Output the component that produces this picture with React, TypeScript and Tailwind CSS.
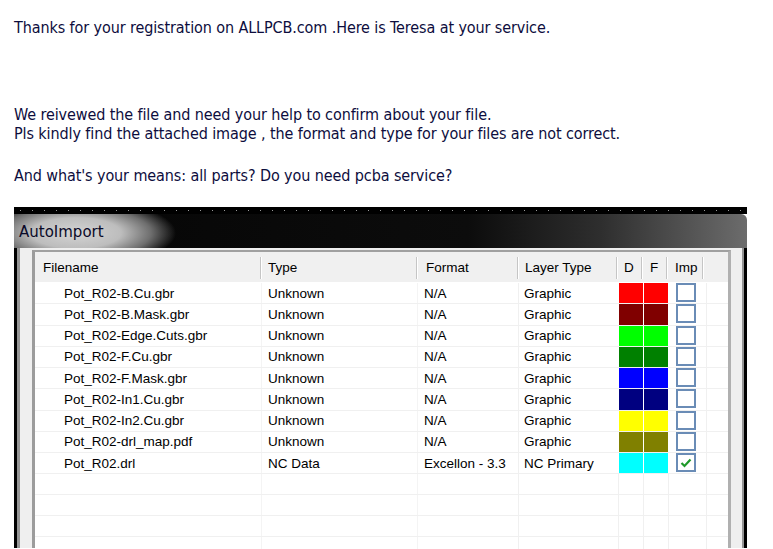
import React from "react";

const rows = [
  { f: "Pot_R02-B.Cu.gbr", t: "Unknown", fm: "N/A", l: "Graphic", c: "#ff0000", chk: false },
  { f: "Pot_R02-B.Mask.gbr", t: "Unknown", fm: "N/A", l: "Graphic", c: "#800000", chk: false },
  { f: "Pot_R02-Edge.Cuts.gbr", t: "Unknown", fm: "N/A", l: "Graphic", c: "#00ff00", chk: false },
  { f: "Pot_R02-F.Cu.gbr", t: "Unknown", fm: "N/A", l: "Graphic", c: "#008000", chk: false },
  { f: "Pot_R02-F.Mask.gbr", t: "Unknown", fm: "N/A", l: "Graphic", c: "#0000ff", chk: false },
  { f: "Pot_R02-In1.Cu.gbr", t: "Unknown", fm: "N/A", l: "Graphic", c: "#000080", chk: false },
  { f: "Pot_R02-In2.Cu.gbr", t: "Unknown", fm: "N/A", l: "Graphic", c: "#ffff00", chk: false },
  { f: "Pot_R02-drl_map.pdf", t: "Unknown", fm: "N/A", l: "Graphic", c: "#808000", chk: false },
  { f: "Pot_R02.drl", t: "NC Data", fm: "Excellon - 3.3", l: "NC Primary", c: "#00ffff", chk: true },
];

function HeaderCell({ w, label, pl, last }: { w: string; label: string; pl: string; last?: boolean }) {
  return (
    <div className={`${w} h-full relative flex items-center pt-[3px] ${pl}`}>
      <span>{label}</span>
      {!last && (
        <div className="absolute right-0 top-[5px] bottom-[3px] w-[2px] border-l border-[#c5c5c5] border-r border-r-white" />
      )}
    </div>
  );
}

export default function App() {
  const dots = Array.from({ length: 61 });
  return (
    <div
      className="w-[773px] h-[549px] bg-white overflow-hidden"
      style={{ fontFamily: '"Liberation Sans", Arial, sans-serif' }}
    >
      <div
        className="px-[14px] text-[16px] leading-[19px] text-[#0d0d3d] tracking-[-0.1px]"
        style={{ fontFamily: '"DejaVu Sans Condensed", "DejaVu Sans", sans-serif' }}
      >
        <p className="pt-[18px]">Thanks for your registration on ALLPCB.com .Here is Teresa at your service.</p>
        <p className="mt-[68px]">We reivewed the file and need your help to confirm about your file.</p>
        <p>Pls kindly find the attached image , the format and type for your files are not correct.</p>
        <p className="mt-[23px]">And what's your means: all parts? Do you need pcba service?</p>
      </div>

      <div className="ml-[14px] mt-[22px] w-[733px]">
        {/* dotted top strip */}
        <div className="h-[7px] bg-black flex items-center justify-between px-[6px]">
          {dots.map((_, i) => (
            <span key={i} className="w-[1px] h-[1px] bg-[#9a9a9a]" />
          ))}
        </div>
        {/* title bar */}
        <div className="h-[34px] rounded-tr-[6px] bg-[radial-gradient(ellipse_100px_34px_at_62px_19px,#d4d4d4_0%,#bdbdbd_45%,#6e6e6e_75%,rgba(0,0,0,0)_100%),linear-gradient(to_right,#050505_0%,#0c0c0c_62%,#2e2e2e_80%,#6c6c6c_100%)] flex items-center pl-[5px] pt-[3px]">
          <span
            className="text-[15px] text-[#0a0a28]"
            style={{ fontFamily: '"DejaVu Sans", sans-serif', color: "#0a0a28" }}
          >
            AutoImport
          </span>
        </div>
        {/* body */}
        <div className="border-l-[3px] border-r-[3px] border-black">
          <div className="border-l-[3px] border-r-[2px] border-[#959595] bg-[#efefef] pl-[12px] pr-[11px] pt-[2px] h-[300px]">
            <div className="border-l-[3px] border-t-[2px] border-r-[3px] border-l-[#9c9c9c] border-t-[#a0a0a0] border-r-[#b0b0b0] bg-white h-full text-[13.5px] text-black">
              {/* header */}
              <div className="h-[31px] flex bg-[#f0f0f0] border-b border-white">
                <HeaderCell w="w-[227px]" label="Filename" pl="pl-[8px]" />
                <HeaderCell w="w-[156px]" label="Type" pl="pl-[6px]" />
                <HeaderCell w="w-[101px]" label="Format" pl="pl-[8px]" />
                <HeaderCell w="w-[99px]" label="Layer Type" pl="pl-[6px]" />
                <HeaderCell w="w-[25px]" label="D" pl="pl-[6px]" />
                <HeaderCell w="w-[25px]" label="F" pl="pl-[7px]" />
                <HeaderCell w="w-[36px]" label="Imp" pl="pl-[7px]" />
                <div className="flex-1" />
              </div>
              {/* rows */}
              {rows.map((r, i) => (
                <div key={i} className="h-[21.25px] flex border-b border-[#f0f0f0]">
                  <div className="w-[227px] pl-[29px] pt-[1px] flex items-center border-r border-[#f4f4f4]">{r.f}</div>
                  <div className="w-[156px] pl-[6px] pt-[1px] flex items-center border-r border-[#f4f4f4]">{r.t}</div>
                  <div className="w-[101px] pl-[6px] pt-[1px] flex items-center border-r border-[#f0f0f0]">{r.fm}</div>
                  <div className="w-[100px] pl-[5px] pt-[1px] flex items-center">{r.l}</div>
                  <div className="w-[25px] pr-[1px]">
                    <div className="h-full" style={{ backgroundColor: r.c }} />
                  </div>
                  <div className="w-[25px] pr-[1px]">
                    <div className="h-full" style={{ backgroundColor: r.c }} />
                  </div>
                  <div className="w-[38px] pl-[7px] border-r border-[#f0f0f0]">
                    <div className="w-[20px] h-[19px] border-2 border-[#6a8cb6] bg-white flex items-center justify-center">
                      {r.chk && (
                        <svg width="12" height="10" viewBox="0 0 12 10">
                          <path d="M1.5 5 L4.5 8 L10.5 1.5" fill="none" stroke="#1f9a2a" strokeWidth="2.2" />
                        </svg>
                      )}
                    </div>
                  </div>
                  <div className="flex-1" />
                </div>
              ))}
              {[0, 1, 2, 3].map((i) => (
                <div key={"e" + i} className="h-[21px] flex border-b border-[#f0f0f0]">
                  <div className="w-[227px] border-r border-[#f4f4f4]" />
                  <div className="w-[156px] border-r border-[#f4f4f4]" />
                  <div className="w-[101px] border-r border-[#f0f0f0]" />
                  <div className="w-[100px] border-r border-[#f0f0f0]" />
                  <div className="w-[25px] border-r border-[#f0f0f0]" />
                  <div className="w-[25px] border-r border-[#f0f0f0]" />
                  <div className="w-[38px] border-r border-[#f0f0f0]" />
                  <div className="flex-1" />
                </div>
              ))}
            </div>
          </div>
        </div>
      </div>
    </div>
  );
}
